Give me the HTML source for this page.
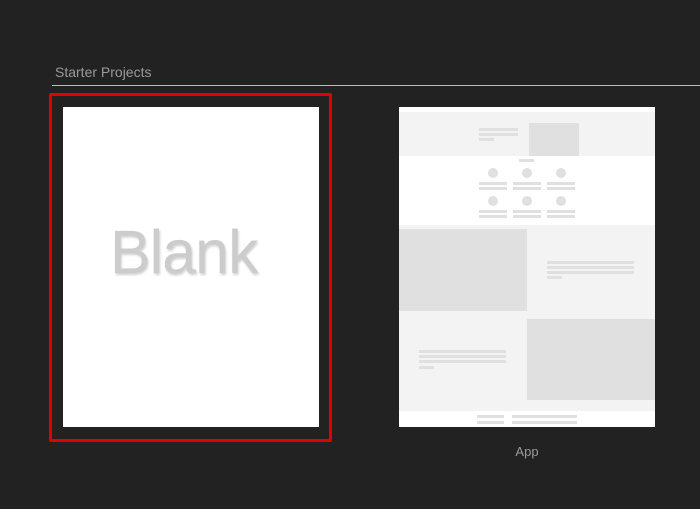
<!DOCTYPE html>
<html><head><meta charset="utf-8"><style>
*{margin:0;padding:0;box-sizing:border-box}
body{width:700px;height:509px;background:#222222;position:relative;overflow:hidden;font-family:"Liberation Sans",sans-serif}
.a{position:absolute}
.g{position:absolute;background:#e0e0e0}
.c{position:absolute;width:10px;height:10px;border-radius:50%;background:#e0e0e0}
</style></head><body>
<div class="a" style="left:55px;top:64px;font-size:14px;color:#9a9a9a">Starter Projects</div>
<div class="a" style="left:52px;top:85px;width:648px;height:1px;background:#bdbdbd"></div>
<div class="a" style="left:49px;top:93px;width:283px;height:349px;border:3px solid #e00000;border-radius:2px"></div>
<div class="a" style="left:63px;top:107px;width:256px;height:320px;background:#fff"></div>
<div class="a" style="left:110px;top:217px;font-size:61px;color:#cccccc;text-shadow:1px 2px 2px rgba(0,0,0,0.18);letter-spacing:-1px">Blank</div>

<div class="a" style="left:399px;top:107px;width:256px;height:320px;background:#fff"></div>
<div class="a" style="left:399px;top:112px;width:256px;height:44px;background:#f3f3f3"></div>
<div class="g" style="left:529px;top:123px;width:50px;height:33px"></div>
<div class="g" style="left:479px;top:128px;width:39px;height:3px"></div>
<div class="g" style="left:479px;top:133px;width:39px;height:3px"></div>
<div class="g" style="left:479px;top:138px;width:15px;height:3px"></div>
<div class="g" style="left:519px;top:159px;width:15px;height:3px"></div>
<div class="c" style="left:488px;top:168px"></div>
<div class="c" style="left:522px;top:168px"></div>
<div class="c" style="left:556px;top:168px"></div>
<div class="g" style="left:479px;top:182px;width:28px;height:3px"></div>
<div class="g" style="left:513px;top:182px;width:28px;height:3px"></div>
<div class="g" style="left:547px;top:182px;width:28px;height:3px"></div>
<div class="g" style="left:479px;top:187px;width:28px;height:3px"></div>
<div class="g" style="left:513px;top:187px;width:28px;height:3px"></div>
<div class="g" style="left:547px;top:187px;width:28px;height:3px"></div>
<div class="c" style="left:488px;top:196px"></div>
<div class="c" style="left:522px;top:196px"></div>
<div class="c" style="left:556px;top:196px"></div>
<div class="g" style="left:479px;top:210px;width:28px;height:3px"></div>
<div class="g" style="left:513px;top:210px;width:28px;height:3px"></div>
<div class="g" style="left:547px;top:210px;width:28px;height:3px"></div>
<div class="g" style="left:479px;top:215px;width:28px;height:3px"></div>
<div class="g" style="left:513px;top:215px;width:28px;height:3px"></div>
<div class="g" style="left:547px;top:215px;width:28px;height:3px"></div>

<div class="a" style="left:399px;top:225px;width:256px;height:186px;background:#f3f3f3"></div>
<div class="g" style="left:399px;top:229px;width:128px;height:82px"></div>
<div class="g" style="left:547px;top:261px;width:87px;height:3px"></div>
<div class="g" style="left:547px;top:266px;width:87px;height:3px"></div>
<div class="g" style="left:547px;top:271px;width:87px;height:3px"></div>
<div class="g" style="left:547px;top:276px;width:15px;height:3px"></div>
<div class="g" style="left:527px;top:319px;width:128px;height:81px"></div>
<div class="g" style="left:419px;top:350px;width:87px;height:3px"></div>
<div class="g" style="left:419px;top:355px;width:87px;height:3px"></div>
<div class="g" style="left:419px;top:360px;width:87px;height:3px"></div>
<div class="g" style="left:419px;top:366px;width:15px;height:3px"></div>
<div class="g" style="left:477px;top:415px;width:27px;height:3px"></div>
<div class="g" style="left:477px;top:421px;width:27px;height:3px"></div>
<div class="g" style="left:512px;top:415px;width:65px;height:3px"></div>
<div class="g" style="left:512px;top:421px;width:65px;height:3px"></div>
<div class="a" style="left:399px;top:444px;width:256px;text-align:center;font-size:13px;color:#9a9a9a">App</div>
</body></html>
